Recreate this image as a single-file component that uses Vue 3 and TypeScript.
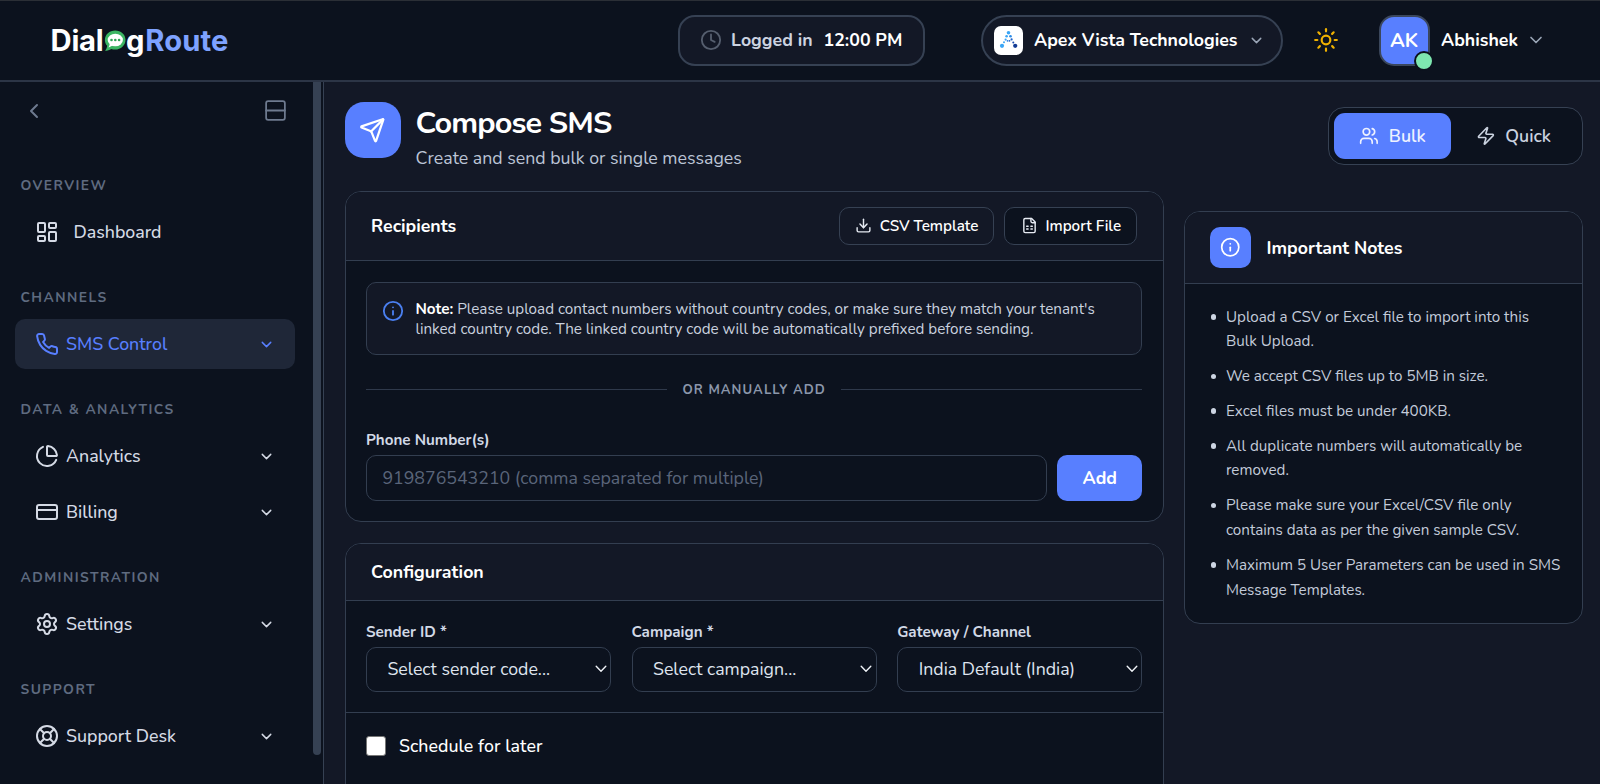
<script setup lang="ts">
interface NavItem { label: string; icon: string; active?: boolean; leaf?: boolean }
interface NavGroup { title: string; items: NavItem[] }

const icons: Record<string, string> = {
  dashboard: '<rect width="7" height="9" x="3" y="3" rx="1"/><rect width="7" height="5" x="14" y="3" rx="1"/><rect width="7" height="9" x="14" y="12" rx="1"/><rect width="7" height="5" x="3" y="16" rx="1"/>',
  phone: '<path d="M22 16.92v3a2 2 0 0 1-2.18 2 19.79 19.79 0 0 1-8.63-3.07 19.5 19.5 0 0 1-6-6 19.79 19.79 0 0 1-3.07-8.67A2 2 0 0 1 4.11 2h3a2 2 0 0 1 2 1.72 12.84 12.84 0 0 0 .7 2.81 2 2 0 0 1-.45 2.11L8.09 9.91a16 16 0 0 0 6 6l1.27-1.27a2 2 0 0 1 2.11-.45 12.84 12.84 0 0 0 2.81.7A2 2 0 0 1 22 16.92z"/>',
  pie: '<path d="M21 12c.552 0 1.005-.449.95-.998a10 10 0 0 0-8.953-8.951c-.55-.055-.998.398-.998.95v8a1 1 0 0 0 1 1z"/><path d="M21.21 15.89A10 10 0 1 1 8 2.83"/>',
  card: '<rect width="20" height="14" x="2" y="5" rx="2"/><path d="M2 10h20"/>',
  gear: '<path d="M9.671 4.136a2.34 2.34 0 0 1 4.659 0 2.34 2.34 0 0 0 3.319 1.915 2.34 2.34 0 0 1 2.33 4.033 2.34 2.34 0 0 0 0 3.831 2.34 2.34 0 0 1-2.33 4.033 2.34 2.34 0 0 0-3.319 1.915 2.34 2.34 0 0 1-4.659 0 2.34 2.34 0 0 0-3.32-1.915 2.34 2.34 0 0 1-2.33-4.033 2.34 2.34 0 0 0 0-3.831A2.34 2.34 0 0 1 6.35 6.051a2.34 2.34 0 0 0 3.319-1.915"/><circle cx="12" cy="12" r="3"/>',
  buoy: '<circle cx="12" cy="12" r="10"/><path d="m4.93 4.93 4.24 4.24"/><path d="m14.83 9.17 4.24-4.24"/><path d="m14.83 14.83 4.24 4.24"/><path d="m9.17 14.83-4.24 4.24"/><circle cx="12" cy="12" r="4"/>',
  left: '<path d="m15 18-6-6 6-6"/>',
  down: '<path d="m6 9 6 6 6-6"/>',
  rows: '<rect width="18" height="18" x="3" y="3" rx="2"/><path d="M3 12h18"/>',
  clock: '<circle cx="12" cy="12" r="10"/><path d="M12 6v6l4 2"/>',
  sun: '<circle cx="12" cy="12" r="4"/><path d="M12 2v2"/><path d="M12 20v2"/><path d="m4.93 4.93 1.41 1.41"/><path d="m17.66 17.66 1.41 1.41"/><path d="M2 12h2"/><path d="M20 12h2"/><path d="m6.34 17.66-1.41 1.41"/><path d="m19.07 4.93-1.41 1.41"/>',
  send: '<path d="M14.536 21.686a.5.5 0 0 0 .937-.024l6.5-19a.496.496 0 0 0-.635-.635l-19 6.5a.5.5 0 0 0-.024.937l7.93 3.18a2 2 0 0 1 1.112 1.11z"/><path d="m21.854 2.147-10.94 10.939"/>',
  users: '<path d="M16 21v-2a4 4 0 0 0-4-4H6a4 4 0 0 0-4 4v2"/><circle cx="9" cy="7" r="4"/><path d="M22 21v-2a4 4 0 0 0-3-3.87"/><path d="M16 3.13a4 4 0 0 1 0 7.75"/>',
  zap: '<path d="M4 14a1 1 0 0 1-.78-1.63l9.9-10.2a.5.5 0 0 1 .86.46l-1.92 6.02A1 1 0 0 0 13 10h7a1 1 0 0 1 .78 1.63l-9.9 10.2a.5.5 0 0 1-.86-.46l1.92-6.02A1 1 0 0 0 11 14z"/>',
  download: '<path d="M21 15v4a2 2 0 0 1-2 2H5a2 2 0 0 1-2-2v-4"/><path d="m7 10 5 5 5-5"/><path d="M12 15V3"/>',
  sheet: '<path d="M15 2H6a2 2 0 0 0-2 2v16a2 2 0 0 0 2 2h12a2 2 0 0 0 2-2V7Z"/><path d="M14 2v4a2 2 0 0 0 2 2h4"/><path d="M8 13h2"/><path d="M14 13h2"/><path d="M8 17h2"/><path d="M14 17h2"/>',
  info: '<circle cx="12" cy="12" r="10"/><path d="M12 16v-4"/><path d="M12 8h.01"/>',
}

const groups: NavGroup[] = [
  { title: 'Overview', items: [{ label: 'Dashboard', icon: 'dashboard', leaf: true }] },
  { title: 'Channels', items: [{ label: 'SMS Control', icon: 'phone', active: true }] },
  { title: 'Data & Analytics', items: [{ label: 'Analytics', icon: 'pie' }, { label: 'Billing', icon: 'card' }] },
  { title: 'Administration', items: [{ label: 'Settings', icon: 'gear' }] },
  { title: 'Support', items: [{ label: 'Support Desk', icon: 'buoy' }] },
]

const fields = [
  { label: 'Sender ID *', value: 'Select sender code...' },
  { label: 'Campaign *', value: 'Select campaign...' },
  { label: 'Gateway / Channel', value: 'India Default (India)' },
]

const notes = [
  'Upload a CSV or Excel file to import into this Bulk Upload.',
  'We accept CSV files up to 5MB in size.',
  'Excel files must be under 400KB.',
  'All duplicate numbers will automatically be removed.',
  'Please make sure your Excel/CSV file only contains data as per the given sample CSV.',
  'Maximum 5 User Parameters can be used in SMS Message Templates.',
]
</script>

<template>
  <div class="app">
    <header class="topbar">
      <div class="logo">
        <span>Dial</span>
        <svg class="bubble" viewBox="0 0 22 22">
          <path d="M11.2.6C5.5.6.9 4.7.9 9.9c0 2.3.9 4.3 2.3 5.9-.2 1.8-1 3.6-2.2 5 2.5-.1 4.6-.8 6.2-1.9 1.3.4 2.6.6 4 .6 5.7 0 10.3-4.3 10.3-9.6S16.9.6 11.2.6z" fill="#3cb563" />
          <ellipse cx="11.3" cy="10" rx="7.6" ry="6.3" fill="#fff" />
          <path d="M6 13.5l-1.4 4 4-2z" fill="#fff" />
          <circle cx="7.5" cy="10" r="1.3" fill="#2fa556" />
          <circle cx="11.3" cy="10" r="1.3" fill="#2fa556" />
          <circle cx="15.1" cy="10" r="1.3" fill="#2fa556" />
        </svg>
        <span>g</span><span class="route">Route</span>
      </div>

      <div class="clock">
        <svg class="ico muted" viewBox="0 0 24 24" v-html="icons.clock" />
        <span class="clock-label">Logged in</span>
        <span class="clock-time">12:00 PM</span>
      </div>

      <div class="tenant">
        <span class="tenant-logo">
          <svg viewBox="0 0 29 29">
            <g fill="#3aa5f5">
              <circle cx="14.5" cy="6.7" r="1.8" />
              <circle cx="12.6" cy="10.2" r="1.3" />
              <circle cx="11.6" cy="13.6" r="1.1" />
              <circle cx="10" cy="16.3" r="1" />
              <circle cx="8" cy="19.8" r="2.1" />
              <circle cx="13.5" cy="14.8" r=".9" fill="#2b7fe0" />
              <circle cx="16.5" cy="10.2" r="1.3" fill="#2a8be8" />
              <circle cx="17.6" cy="13.4" r="1.1" fill="#2163c9" />
              <circle cx="15.5" cy="14.8" r=".9" fill="#2163c9" />
              <circle cx="19.3" cy="16.4" r="1" fill="#1a4cae" />
              <circle cx="21.2" cy="19.8" r="2.1" fill="#123a93" />
            </g>
          </svg>
        </span>
        <span class="tenant-name">Apex Vista Technologies</span>
        <svg class="ico chev" viewBox="0 0 24 24" v-html="icons.down" />
      </div>

      <svg class="ico sun" viewBox="0 0 24 24" v-html="icons.sun" />

      <div class="user">
        <div class="avatar">AK<i class="status" /></div>
        <span class="user-name">Abhishek</span>
        <svg class="ico chev big" viewBox="0 0 24 24" v-html="icons.down" />
      </div>
    </header>

    <div class="body">
      <aside class="sidebar">
        <div class="side-inner">
          <div class="side-tools">
            <svg class="ico back" viewBox="0 0 24 24" v-html="icons.left" />
            <svg class="ico rows" viewBox="0 0 24 24" v-html="icons.rows" />
          </div>
          <nav>
            <section v-for="g in groups" :key="g.title" class="group">
              <h6>{{ g.title }}</h6>
              <a v-for="it in g.items" :key="it.label" class="nav" :class="{ active: it.active, leaf: it.leaf }">
                <svg class="ico" viewBox="0 0 24 24" v-html="icons[it.icon]" />
                <span>{{ it.label }}</span>
                <svg v-if="!it.leaf" class="ico nav-chev" viewBox="0 0 24 24" v-html="icons.down" />
              </a>
            </section>
          </nav>
        </div>
        <div class="scroll-thumb" />
      </aside>

      <main class="main">
        <div class="page-head">
          <div class="page-icon"><svg class="ico" viewBox="0 0 24 24" v-html="icons.send" /></div>
          <div class="page-text">
            <h1>Compose SMS</h1>
            <p>Create and send bulk or single messages</p>
          </div>
          <div class="toggle">
            <button class="on"><svg class="ico" viewBox="0 0 24 24" v-html="icons.users" />Bulk</button>
            <button><svg class="ico" viewBox="0 0 24 24" v-html="icons.zap" />Quick</button>
          </div>
        </div>

        <div class="columns">
          <div class="left">
            <section class="card">
              <div class="card-head tall">
                <h2>Recipients</h2>
                <button class="btn"><svg class="ico" viewBox="0 0 24 24" v-html="icons.download" />CSV Template</button>
                <button class="btn dark"><svg class="ico" viewBox="0 0 24 24" v-html="icons.sheet" />Import File</button>
              </div>
              <div class="card-body">
                <div class="note">
                  <svg class="ico" viewBox="0 0 24 24" v-html="icons.info" />
                  <p><b>Note:</b> Please upload contact numbers without country codes, or make sure they match your tenant's linked country code. The linked country code will be automatically prefixed before sending.</p>
                </div>
                <div class="or"><span>OR MANUALLY ADD</span></div>
                <label class="lbl">Phone Number(s)</label>
                <div class="row">
                  <input class="input" placeholder="919876543210 (comma separated for multiple)" />
                  <button class="add">Add</button>
                </div>
              </div>
            </section>

            <section class="card config">
              <div class="card-head"><h2>Configuration</h2></div>
              <div class="fields">
                <div v-for="f in fields" :key="f.label" class="field">
                  <label class="lbl">{{ f.label }}</label>
                  <div class="select">
                    <span>{{ f.value }}</span>
                    <svg class="ico" viewBox="0 0 12 12"><path d="M1.2 3.3 6 8.3l4.8-5" /></svg>
                  </div>
                </div>
              </div>
              <div class="schedule"><span class="check" />Schedule for later</div>
            </section>
          </div>

          <aside class="card notes">
            <div class="notes-head">
              <span class="notes-icon"><svg class="ico" viewBox="0 0 24 24" v-html="icons.info" /></span>
              <h2>Important Notes</h2>
            </div>
            <ul>
              <li v-for="n in notes" :key="n">{{ n }}</li>
            </ul>
          </aside>
        </div>
      </main>
    </div>
  </div>
</template>

<style>
html, body { overflow: hidden; background: #131826; }
</style>

<style scoped>
.app {
  height: 784px;
  box-sizing: border-box;
  overflow: hidden;
  display: flex;
  flex-direction: column;
  background: #131826;
  color: #fff;
  font-family: Nunito, "Open Sans", sans-serif;
  font-size: 17.75px;
  border-top: 1px solid #2b2f36;
}
.app *, .app *::before, .app *::after { box-sizing: border-box; }
h1, h2, h6, p, ul { margin: 0; padding: 0; }
button, input { font: inherit; color: inherit; border: 0; background: none; margin: 0; padding: 0; }
.ico {
  display: block;
  flex: none;
  fill: none;
  stroke: currentColor;
  stroke-width: 2;
  stroke-linecap: round;
  stroke-linejoin: round;
}

/* Top bar */
.topbar {
  flex: none;
  height: 81px;
  display: flex;
  align-items: center;
  background: #0c121e;
  border-bottom: 2px solid #2c3546;
  padding: 0 0 1px 50.5px;
}
.logo { width: 627.5px; display: flex; align-items: center; font: 700 29.2px/40px Inter, sans-serif; letter-spacing: -.2px; padding-top: 1px; }
.bubble { width: 22px; height: 22px; margin: 0 0 0 .5px; }
.route { color: #7ea2ff; margin-left: 1px; letter-spacing: .1px; }
.clock {
  width: 247px;
  height: 51px;
  border: 2px solid #364153;
  border-radius: 17px;
  background: #131826;
  display: flex;
  align-items: center;
  padding-left: 20px;
  margin-right: 56px;
}
.muted { width: 22px; height: 22px; color: #555e6e; }
.clock-label { margin-left: 9px; color: #ccd3e0; font-weight: 700; }
.clock-time { margin-left: 11px; font-weight: 700; }
.tenant {
  width: 302px;
  height: 51px;
  border: 2px solid #364153;
  border-radius: 26px;
  background: #131826;
  display: flex;
  align-items: center;
  padding-left: 11px;
  margin-right: 30px;
}
.tenant-logo { width: 29px; height: 29px; border-radius: 7px; background: #fff; margin-right: 11px; }
.tenant-logo svg { display: block; width: 29px; height: 29px; }
.tenant-name { font-weight: 700; letter-spacing: -.02px; }
.chev { width: 17px; height: 17px; color: #9aa5b6; margin-left: 10.5px; }
.sun { width: 26px; height: 26px; color: #f0b100; margin-right: 39.5px; stroke-width: 2; }
.user { display: flex; align-items: center; font-weight: 700; }
.avatar {
  position: relative;
  width: 51px;
  height: 51px;
  border: 2px solid #3b475c;
  border-radius: 15px;
  background: #587fff;
  display: flex;
  align-items: center;
  justify-content: center;
  font-size: 20px;
}
.status {
  position: absolute;
  right: -6.5px;
  bottom: -7px;
  width: 20px;
  height: 20px;
  border: 2px solid #0c121e;
  border-radius: 50%;
  background: #7ee7b0;
}
.user-name { margin-left: 11.5px; }
.chev.big { width: 20px; height: 20px; margin-left: 8px; }

/* Sidebar */
.body { flex: 1; min-height: 0; display: flex; }
.sidebar {
  flex: none;
  width: 324px;
  display: flex;
  background: #0c121e;
  border-right: 1px solid #364153;
}
.side-inner { width: 313px; padding: 0 18px 0 15px; }
.side-tools { height: 93.5px; padding: 16px 7px 0 7px; display: flex; justify-content: space-between; color: #6e7a8f; }
.back { width: 24px; height: 24px; margin-top: .5px; }
.rows { width: 25px; height: 25px; stroke-width: 1.7; }
.group { margin-bottom: 30px; }
.group h6 {
  height: 31.4px;
  padding: .5px 0 0 5.5px;
  font-size: 13.8px;
  line-height: 20px;
  font-weight: 700;
  letter-spacing: 1.45px;
  text-transform: uppercase;
  color: #5f6b80;
}
.nav {
  height: 50.6px;
  border-radius: 10px;
  display: flex;
  align-items: center;
  padding: 0 20.5px 0 20px;
  color: #d5dae5;
  font-weight: 500;
}
.nav + .nav { margin-top: 5.4px; }
.nav .ico { width: 24px; height: 24px; stroke-width: 2; }
.nav span { flex: 1; margin-left: 7px; }
.nav.leaf span { margin-left: 14.5px; }
.nav .nav-chev { width: 17px; height: 17px; stroke-width: 2; }
.nav.active { background: #1f2738; color: #587fff; }
.scroll-thumb { width: 7.5px; height: 673px; background: #364153; border-radius: 0 0 4px 4px; }

/* Page */
.main { flex: 1; min-width: 0; padding: 20px 17px 0 20.6px; }
.page-head { height: 88.5px; display: flex; }
.page-icon {
  width: 56px;
  height: 56px;
  border-radius: 19px;
  background: #587fff;
  display: flex;
  align-items: center;
  justify-content: center;
}
.page-icon .ico { width: 26.5px; height: 26.5px; }
.page-text { flex: 1; padding-left: 15px; }
h1 { font-size: 30.6px; line-height: 41px; font-weight: 700; letter-spacing: -.85px; padding-top: .5px; }
.page-text p { line-height: 28px; color: #bcc5d6; }
.toggle {
  width: 255px;
  height: 58px;
  margin-top: 5px;
  padding: 5px;
  border: 1px solid #364153;
  border-radius: 16px;
  background: #0c121e;
  display: flex;
}
.toggle button {
  width: 116.5px;
  height: 46px;
  border-radius: 11px;
  display: flex;
  align-items: center;
  padding-left: 25px;
  gap: 10px;
  font-weight: 600;
  color: #cbd3e0;
}
.toggle .on { background: #587fff; color: #eef2ff; }
.toggle .ico { width: 19.8px; height: 19.8px; }
.columns { display: flex; align-items: flex-start; gap: 20.4px; }
.left { width: 819px; }
.card { border: 1px solid #333e50; border-radius: 16px; background: #0c121e; overflow: hidden; }
.card-head {
  height: 57.5px;
  padding: 0 25.5px;
  display: flex;
  align-items: center;
  gap: 10px;
  background: #131826;
  border-bottom: 1px solid #333e50;
}
.card-head.tall { height: 69.5px; }
h2 { flex: 1; font-size: 17.75px; font-weight: 700; }
.btn {
  height: 38px;
  border: 1px solid #364153;
  border-radius: 10px;
  padding: 0 15px 0 15.5px;
  display: flex;
  align-items: center;
  gap: 7.5px;
  font-size: 15.2px;
  font-weight: 600;
}
.btn .ico { width: 17px; height: 17px; color: #e6eaf2; }
.btn.dark { background: #0c121e; }
.card-body { padding: 20.5px 20.3px; }
.note {
  height: 73.5px;
  border: 1px solid #333e50;
  border-radius: 10px;
  background: #131826;
  display: flex;
  padding: 16px 15px;
  color: #c9d1df;
  font-size: 15.22px;
  line-height: 20.5px;
}
.note .ico { width: 22px; height: 22px; color: #4a7ff0; margin: 1px 11.5px 0 0; }
.note b { color: #fff; }
.or {
  height: 24px;
  margin-top: 22.5px;
  display: flex;
  align-items: center;
  gap: 15px;
  color: #8b97ab;
  font-size: 13.1px;
  font-weight: 700;
  letter-spacing: 1.05px;
}
.or::before, .or::after { content: ""; flex: 1; height: 1.5px; background: #2f394b; }
.lbl { display: block; font-size: 15.2px; line-height: 20px; font-weight: 700; color: #d2d9e6; }
.card-body .lbl { margin-top: 28.3px; }
.row { display: flex; gap: 10px; margin-top: 5px; }
.input {
  flex: 1;
  height: 46px;
  border: 1px solid #333e50;
  border-radius: 10px;
  padding: 0 15.5px;
}
.input::placeholder { color: #5a657a; opacity: 1; }
.add { width: 85px; height: 46px; border-radius: 10px; background: #587fff; font-weight: 700; }
.config { margin-top: 20.5px; height: 300px; }
.fields {
  height: 111.3px;
  padding: 20.3px 20.3px 0;
  display: grid;
  grid-template-columns: repeat(3, 1fr);
  gap: 20.5px;
  border-bottom: 1px solid #333e50;
}
.select {
  height: 45px;
  margin-top: 5px;
  border: 1px solid #333e50;
  border-radius: 10px;
  display: flex;
  align-items: center;
  justify-content: space-between;
  padding: 0 3.5px 0 20.5px;
  color: #dfe4ee;
}
.select .ico { width: 12px; height: 12px; color: #eef1f6; stroke-width: 1.4; }
.schedule { display: flex; align-items: center; gap: 13px; padding: 21px 20.3px; font-weight: 500; letter-spacing: .06px; }
.check { width: 20px; height: 20px; border: 1px solid #767676; border-radius: 3px; background: #fff; }

/* Notes panel */
.notes { width: 399px; margin-top: 20.5px; }
.notes-head {
  height: 72px;
  padding-left: 25px;
  display: flex;
  align-items: center;
  gap: 15.5px;
  background: #131826;
  border-bottom: 1px solid #333e50;
}
.notes-icon {
  width: 41px;
  height: 41px;
  border-radius: 10px;
  background: #587fff;
  display: flex;
  align-items: center;
  justify-content: center;
}
.notes-icon .ico { width: 20.5px; height: 20.5px; }
.notes ul { list-style: none; padding: 20.5px 20.5px 20.5px 41px; display: flex; flex-direction: column; gap: 10px; }
.notes li { position: relative; font-size: 15.2px; line-height: 24.8px; color: #c3cbda; }
.notes li::before {
  content: "";
  position: absolute;
  left: -15px;
  top: 9.5px;
  width: 5.5px;
  height: 5.5px;
  border-radius: 50%;
  background: #cdd5e3;
}
</style>
